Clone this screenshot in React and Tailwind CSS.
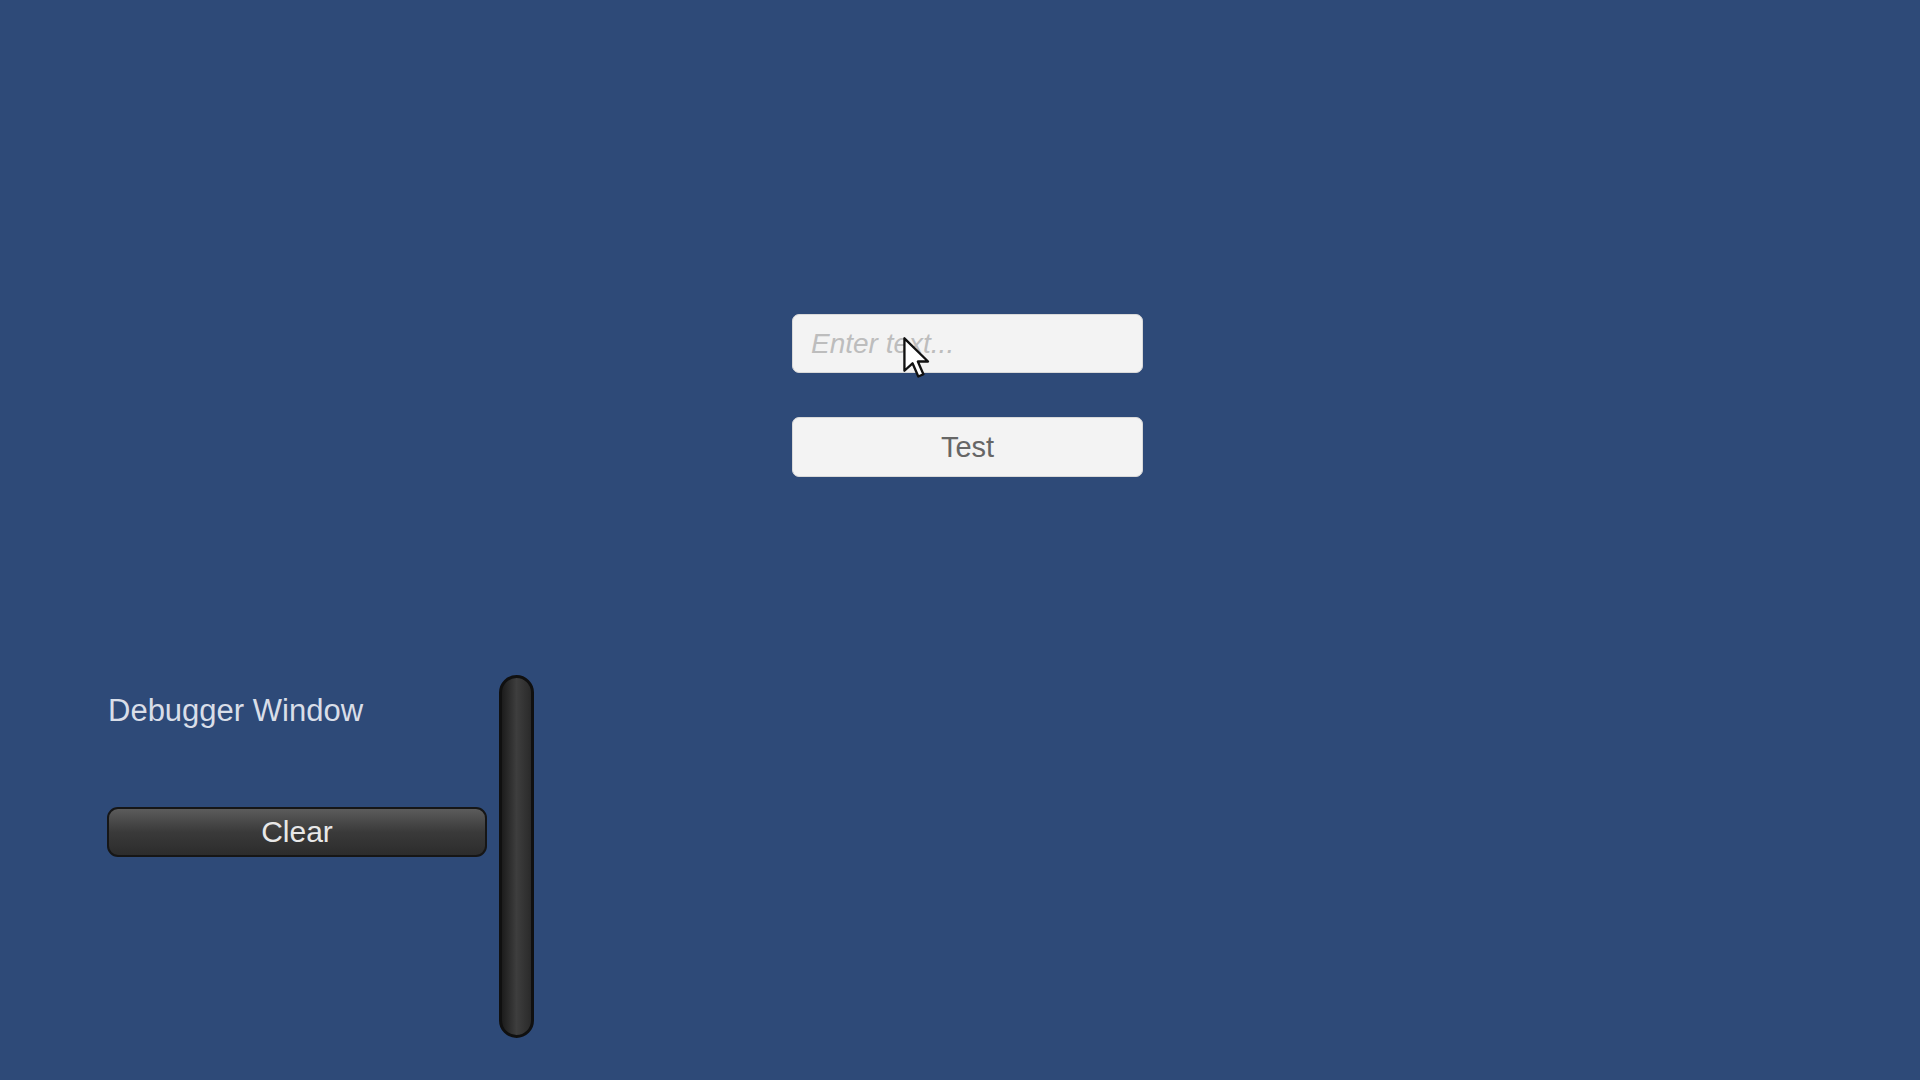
// App.jsx
// Unity-style test scene: text field + button, and a small debugger panel with a scrollbar

function Cursor() {
  // mouse pointer sitting over the placeholder text
  return (
    <svg width="30" height="44" viewBox="0 0 12 19" className="absolute left-[901px] top-[336px]">
      <path d="M1 1 L1 15 L4.5 11.8 L7 17.5 L9.2 16.5 L6.8 11 L11.2 11 Z"
        fill="#ffffff" stroke="#111111" strokeWidth="1" strokeLinejoin="round" />
    </svg>
  );
}

export default function App() {
  return (
    <div className="relative w-full h-[1080px] overflow-hidden bg-[#2e4a78]"
      style={{ fontFamily: '"Liberation Sans", Arial, sans-serif' }}>

      {/* Centre controls */}
      <div className="pt-[314px] pl-[792px] flex flex-col">
        <div className="w-[351px] h-[59px] rounded-[7px] bg-[#f3f3f3] border border-[#d9d9d9] flex items-center pl-[18px]">
          <span className="italic text-[28px] text-[#bdbdbd] leading-none">Enter text...</span>
        </div>
        <button className="mt-[44px] w-[351px] h-[60px] rounded-[7px] bg-[#f3f3f3] border border-[#d9d9d9] text-[29px] text-[#666666] leading-none">
          Test
        </button>
      </div>

      {/* Debugger window */}
      <div className="mt-[198px] pl-[107px] flex gap-[12px]">
        <div className="w-[380px] flex flex-col">
          <div className="mt-[18px] text-[31px] text-[#d9dee8] leading-[35px] pl-[1px]">Debugger Window</div>
          <button className="mt-[79px] w-[380px] h-[50px] rounded-[11px] border-2 border-[#161616] bg-gradient-to-b from-[#5c5c5c] via-[#3a3a3a] to-[#2c2c2c] text-[30px] text-[#e8e8e8] leading-none">
            Clear
          </button>
        </div>
        <div className="w-[35px] h-[363px] rounded-full border-[3px] border-[#101010] bg-gradient-to-r from-[#1c1c1c] via-[#3e3e3e] to-[#2a2a2a]" />
      </div>

      <Cursor />
    </div>
  );
}
